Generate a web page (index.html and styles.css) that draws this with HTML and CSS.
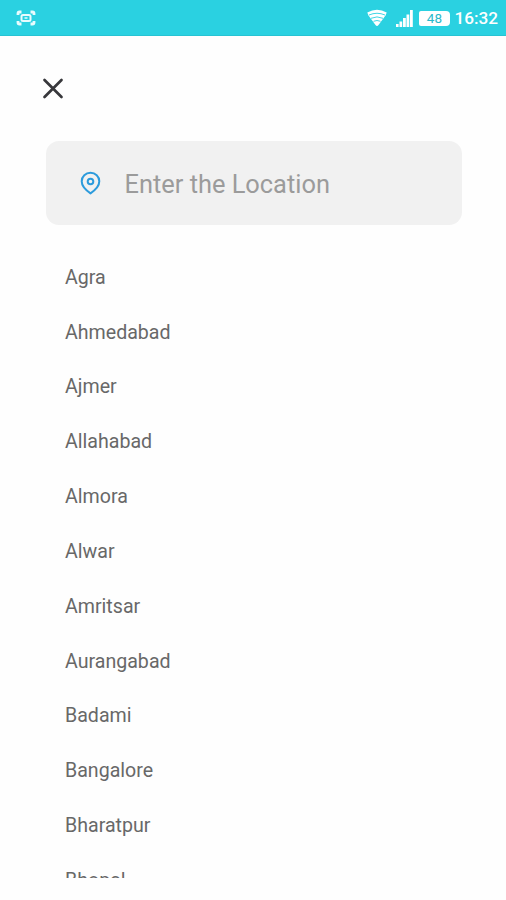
FILE: index.html
```html
<!DOCTYPE html>
<html lang="en">
<head>
<meta charset="utf-8">
<title>Select location</title>
<link rel="stylesheet" href="styles.css">
</head>
<body>
<header class="status">
  <svg class="capture" width="20" height="16" viewBox="0 0 20 16" fill="none" stroke="#e8fcfe" stroke-width="2.8">
    <path d="M2 5V3.500Q2 2 3.500 2H5.500M14.500 2H16.500Q18 2 18 3.500V5M18 11V12.500Q18 14 16.500 14H14.500M5.500 14H3.500Q2 14 2 12.500V11"/>
    <rect x="5.500" y="5" width="9" height="6" rx="1.500" stroke-width="2"/>
    <path d="M8.500 8h3" stroke-width="1.500"/>
  </svg>
  <div class="indicators">
    <svg class="wifi" width="20" height="18" viewBox="0 0 20 18">
      <path fill="#fff" d="M.3 3.500Q10-2 19.700 3.500L18.500 6.500L11.500 16Q10 18 8.500 16L1.500 6.500Z"/>
      <path fill="none" stroke="#2ad1e1" stroke-width=".9" d="M2 6Q10 2.500 18 6M4 9.300Q10 6.500 16 9.300M6.500 12.300Q10 10.700 13.500 12.300"/>
    </svg>
    <svg class="signal" width="17" height="17" viewBox="0 0 17 17" fill="#fff">
      <path d="M0 14h2.600v3H0zM3.500 11.500h2.700V17H3.500zM7 8h2.800v9H7zM10.500 4.500h2.800v12.500h-2.800zM14 0h2.800v17H14z"/>
    </svg>
    <span class="battery">48</span>
    <span class="clock">16:32</span>
  </div>
</header>
<main>
  <svg class="close" width="22" height="22" viewBox="0 0 22 22" fill="none" stroke="#37373b" stroke-width="2.700" stroke-linecap="round">
    <path d="M2.500 2L19.500 19M19.500 2L2.500 19"/>
  </svg>
  <div class="search">
    <svg width="21" height="24" viewBox="0 0 21 24" fill="none" stroke="#2c9bdc" stroke-width="2">
      <path d="M10.500 22.300C7.500 20.300 1.700 15.500 1.700 10.300A8.800 8.500 0 0 1 19.300 10.300C19.300 15.500 13.500 20.300 10.500 22.300Z"/>
      <circle cx="10.500" cy="10.500" r="2.800"/>
    </svg>
    <span>Enter the Location</span>
  </div>
  <ul class="cities">
    <li>Agra</li>
    <li>Ahmedabad</li>
    <li>Ajmer</li>
    <li>Allahabad</li>
    <li>Almora</li>
    <li>Alwar</li>
    <li>Amritsar</li>
    <li>Aurangabad</li>
    <li>Badami</li>
    <li>Bangalore</li>
    <li>Bharatpur</li>
    <li>Bhopal</li>
  </ul>
</main>
</body>
</html>
```

FILE: styles.css
```css
* { box-sizing: border-box; }
body {
  margin: 0;
  height: 900px;
  overflow: hidden;
  background: #fefefe;
  font-family: Roboto, sans-serif;
}
.status {
  display: flex;
  align-items: center;
  justify-content: space-between;
  height: 36px;
  padding: 1px 8px 0 16px;
  background: #2ad1e1;
  border-bottom: 1px solid #27c3d3;
}
.indicators { display: flex; align-items: center; color: #fff; }
.wifi { margin-right: 9px; }
.signal { margin-right: 6px; }
.battery {
  width: 31px;
  height: 15px;
  margin-right: 4px;
  padding-right: 1px;
  border-radius: 2px 4px 4px 2px;
  background: #fff;
  color: #2ab9ca;
  font-size: 13.500px;
  line-height: 15px;
  text-align: center;
}
.clock { font-size: 17.200px; font-weight: 500; line-height: 20px; }
main { display: flex; flex-direction: column; }
.close { margin: 42px 0 0 42px; }
.search {
  display: flex;
  align-items: center;
  gap: 23.500px;
  width: 416px;
  height: 84px;
  margin: 41px 0 0 45.500px;
  padding-left: 34.500px;
  border-radius: 13px;
  background: #f1f1f1;
  color: #9b9b9b;
  font-size: 25.400px;
}
.search span { padding-top: 1px; }
.cities {
  height: 627.300px;
  margin: 25.700px 0 0;
  padding: 0 0 0 65px;
  overflow: hidden;
  list-style: none;
  color: #686868;
  font-size: 19.600px;
}
.cities li { height: 54.850px; line-height: 54.850px; }
```
